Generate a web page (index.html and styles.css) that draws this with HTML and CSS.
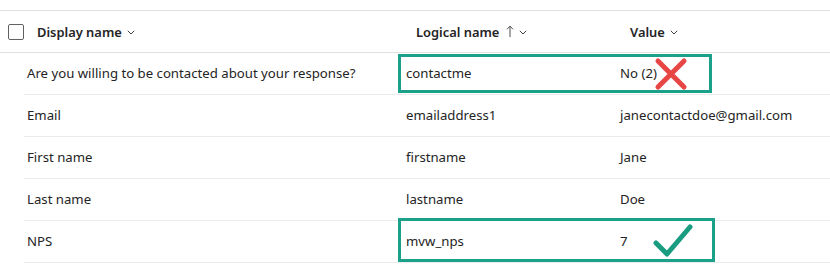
FILE: index.html
```html
<!DOCTYPE html>
<html lang="en">
<head>
  <meta charset="UTF-8" />
  <title>Response fields</title>
  <link rel="stylesheet" href="styles.css">
</head>
<body>
  <div class="grid">
    <!-- Header -->
    <div class="grid-head">
      <div class="head-cell first">
        <span class="checkbox"></span>
        <span class="label">Display name</span>
        <svg class="chev" viewBox="0 0 8 5"><path d="M0.8 0.8 L4 4 L7.2 0.8" /></svg>
      </div>
      <div class="head-cell">
        <span class="label">Logical name</span>
        <svg class="arrow" viewBox="0 0 8 14"><path d="M4 13 V1.5 M0.8 4.6 L4 1.2 L7.2 4.6" /></svg>
        <svg class="chev" viewBox="0 0 8 5"><path d="M0.8 0.8 L4 4 L7.2 0.8" /></svg>
      </div>
      <div class="head-cell">
        <span class="label">Value</span>
        <svg class="chev" viewBox="0 0 8 5"><path d="M0.8 0.8 L4 4 L7.2 0.8" /></svg>
      </div>
    </div>

    <!-- Rows -->
    <div class="grid-row">
      <div class="cell">Are you willing to be contacted about your response?</div>
      <div class="cell">contactme</div>
      <div class="cell">No (2)</div>
      <div class="mark mark-wrong"></div>
      <svg class="cross" viewBox="0 0 36 34"><path d="M5 4 L31 30 M31 4 L5 30" /></svg>
    </div>
    <div class="grid-row">
      <div class="cell">Email</div>
      <div class="cell">emailaddress1</div>
      <div class="cell">janecontactdoe@gmail.com</div>
    </div>
    <div class="grid-row">
      <div class="cell">First name</div>
      <div class="cell">firstname</div>
      <div class="cell">Jane</div>
    </div>
    <div class="grid-row">
      <div class="cell">Last name</div>
      <div class="cell">lastname</div>
      <div class="cell">Doe</div>
    </div>
    <div class="grid-row">
      <div class="cell">NPS</div>
      <div class="cell">mvw_nps</div>
      <div class="cell">7</div>
      <div class="mark mark-right"></div>
      <svg class="tick" viewBox="0 0 42 36"><path d="M4 21 L15 32 L38 5" /></svg>
    </div>
  </div>
</body>
</html>
```

FILE: styles.css
```css
* {
  margin: 0;
  padding: 0;
  box-sizing: border-box;
}
body {
  background: #fff;
  font-family: "Noto Sans", "Open Sans", sans-serif;
  font-size: 13.2px;
  color: #242424;
}
.grid {
  margin-top: 10px;
  border-top: 1px solid #e0e0e0;
}
/* Header */
.grid-head {
  display: grid;
  grid-template-columns: 406px 214px 1fr;
  height: 42px;
  border-bottom: 1px solid #e0e0e0;
}
.head-cell {
  display: flex;
  align-items: center;
  padding-left: 10px;
  font-weight: 600;
  font-size: 12.9px;
}
.head-cell.first {
  padding-left: 8px;
}
.checkbox {
  width: 16px;
  height: 16px;
  border: 1px solid #616161;
  border-radius: 2px;
  margin-right: 13px;
}
.chev {
  width: 8px;
  height: 5px;
  margin-left: 5px;
  margin-top: 1px;
  fill: none;
  stroke: #424242;
  stroke-width: 1;
}
.arrow {
  width: 8px;
  height: 13px;
  margin-left: 7px;
  fill: none;
  stroke: #424242;
  stroke-width: 1;
}
/* Body rows */
.grid-row {
  position: relative;
  display: grid;
  grid-template-columns: 382px 214px 1fr;
  height: 42px;
  margin-left: 24px;
  border-bottom: 1px solid #ebebeb;
}
.cell {
  display: flex;
  align-items: center;
  padding-left: 3px;
  padding-bottom: 2px;
  white-space: nowrap;
}
.cell + .cell {
  padding-left: 0;
}
/* Annotations */
.mark {
  position: absolute;
  border: 3px solid #1ba08a;
  left: 374px;
}
.mark-wrong {
  top: 1px;
  width: 314px;
  height: 39px;
}
.mark-right {
  top: -3px;
  width: 317px;
  height: 44px;
}
.cross {
  position: absolute;
  left: 629px;
  top: 4px;
  width: 36px;
  height: 34px;
  fill: none;
  stroke: #e84545;
  stroke-width: 5;
  stroke-linecap: round;
}
.tick {
  position: absolute;
  left: 628px;
  top: 1px;
  width: 42px;
  height: 36px;
  fill: none;
  stroke: #1a9c80;
  stroke-width: 5;
  stroke-linecap: round;
  stroke-linejoin: round;
}
```
